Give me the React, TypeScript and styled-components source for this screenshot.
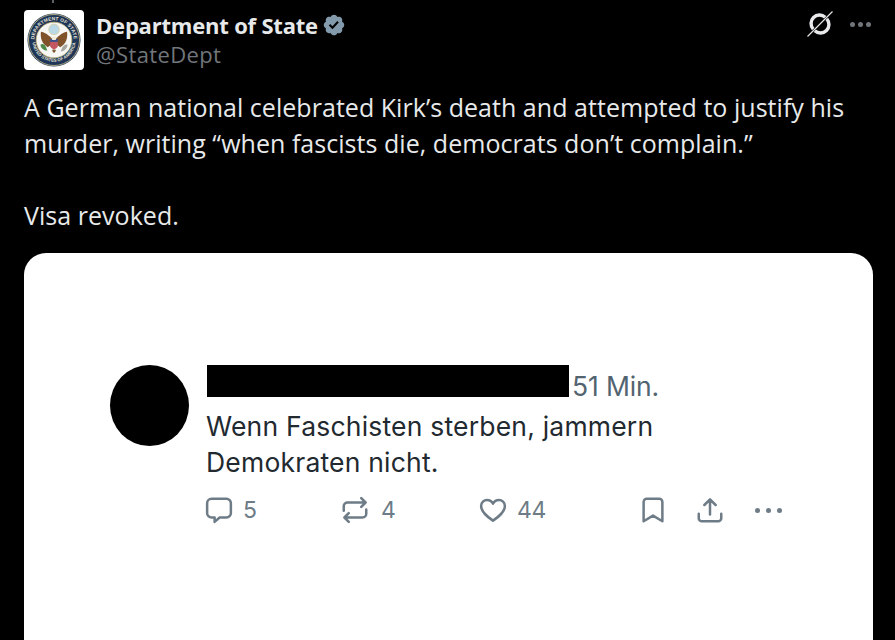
import React from "react";
import styled, { createGlobalStyle } from "styled-components";

const Global = createGlobalStyle`
  html, body { margin: 0; padding: 0; background: #000; }
  body { width: 895px; height: 640px; overflow: hidden; }
`;

const Page = styled.main`
  width: 895px;
  height: 640px;
  overflow: hidden;
  background: #000;
  padding: 10px 22px 0 24px;
  box-sizing: border-box;
  font-family: "Open Sans", "Noto Sans", sans-serif;
`;

const Header = styled.header`
  display: flex;
  align-items: flex-start;
  gap: 12px;
  height: 60px;
`;

const Avatar = styled.div`
  position: relative;
  width: 60px;
  height: 60px;
  flex: none;
  border-radius: 4px;
  background: #fff;
  display: flex;
  align-items: center;
  justify-content: center;
`;

const ThreadTick = styled.span`
  position: absolute;
  top: -10px;
  left: 28px;
  width: 2px;
  height: 3px;
  background: #5c6166;
`;

const Identity = styled.div`
  display: flex;
  flex-direction: column;
  flex: 1;
`;

const NameRow = styled.div`
  display: flex;
  align-items: center;
  gap: 4px;
  height: 30px;
`;

const Name = styled.span`
  color: #e7e9ea;
  font-size: 22px;
  font-weight: 700;
  letter-spacing: -0.2px;
  line-height: 29px;
`;

const Handle = styled.span`
  color: #71767b;
  font-size: 22px;
  line-height: 29px;
  letter-spacing: 0.35px;
`;

const Actions = styled.div`
  display: flex;
  align-items: center;
  gap: 17px;
  padding: 1px 2px 0 0;
`;

const Body = styled.p`
  margin: 19px 0 0;
  color: #e7e9ea;
  font-size: 25px;
  font-weight: 500;
  line-height: 36px;
  letter-spacing: 0.04px;
  white-space: pre-line;
`;

const Card = styled.section`
  margin-top: 20px;
  width: 849px;
  height: 420px;
  background: #fff;
  border-radius: 22px;
  padding: 112px 0 0 86px;
  box-sizing: border-box;
  display: flex;
  align-items: flex-start;
  gap: 18px;
  font-family: Inter, Roboto, sans-serif;
`;

const Blackout = styled.div`
  width: 79px;
  height: 81px;
  flex: none;
  border-radius: 50%;
  background: #000;
`;

const PostColumn = styled.div`
  display: flex;
  flex-direction: column;
  width: 600px;
`;

const MetaRow = styled.div`
  display: flex;
  align-items: flex-end;
  gap: 3px;
  height: 32px;
`;

const Redaction = styled.div`
  width: 362px;
  height: 32px;
  background: #000;
  flex: none;
`;

const Time = styled.span`
  color: #536471;
  font-size: 26.5px;
  line-height: 27px;
  letter-spacing: -0.15px;
  margin-bottom: -3px;
`;

const Quote = styled.p`
  margin: 11px 0 0 -1px;
  color: #22292f;
  font-size: 26.5px;
  line-height: 36px;
  letter-spacing: 0.2px;
  white-space: pre-line;
`;

const Stats = styled.div`
  display: flex;
  align-items: center;
  margin: 12px 0 0 -3px;
  height: 36px;
`;

const Stat = styled.div<{ $width: number; $gap?: number }>`
  display: flex;
  align-items: center;
  gap: ${(p) => p.$gap ?? 11}px;
  width: ${(p) => p.$width}px;
  flex: none;
  color: #6e7c87;
  font-size: 23px;
  letter-spacing: -0.4px;
`;

const Seal = () => (
  <svg width="54" height="54" viewBox="0 0 56 56">
    <defs>
      <path id="sealTop" d="M7.500 28a20.500 20.500 0 0 1 41 0" />
      <path id="sealBottom" d="M5.500 28a22.500 22.500 0 0 0 45 0" />
    </defs>
    <circle cx="28" cy="28" r="27.500" fill="#1f3658" />
    <circle cx="28" cy="28" r="26.500" fill="none" stroke="#d8c98c" strokeWidth="0.8" />
    <circle cx="28" cy="28" r="18.500" fill="#f6f6f4" stroke="#c8b87a" strokeWidth="0.8" />
    <text fontSize="5" fontWeight="700" fill="#e8e5d4" fontFamily="Liberation Sans, sans-serif" letterSpacing="0.15">
      <textPath href="#sealTop" startOffset="50%" textAnchor="middle">DEPARTMENT OF STATE</textPath>
    </text>
    <text fontSize="4.500" fontWeight="700" fill="#e8e5d4" fontFamily="Liberation Sans, sans-serif">
      <textPath href="#sealBottom" startOffset="50%" textAnchor="middle">UNITED STATES OF AMERICA</textPath>
    </text>
    <circle cx="28" cy="17" r="5.500" fill="#bcd9e8" stroke="#d6cf9c" strokeWidth="0.8" />
    <path d="M26 27 C23 23 18 20 14.500 19.500 C13.500 26 15.500 32 21.500 35.500 L25 33Z" fill="#80522a" />
    <path d="M30 27 C33 23 38 20 41.500 19.500 C42.500 26 40.500 32 34.500 35.500 L31 33Z" fill="#80522a" />
    <path d="M24 27h8v7c0 2-2 3-4 4-2-1-4-2-4-4Z" fill="#c45662" />
    <path d="M24 27h8v3h-8Z" fill="#39508a" />
    <path d="M26 24.500h4v3.500h-4Z" fill="#f1ead6" />
    <path d="M14 33c2-2 5 0 6 3l1 3c-3 0-7-2-7-6Z" fill="#4d8a4a" />
    <path d="M42 33c-2-1-5 1-6 4l-1 3c3 0 7-3 7-7Z" fill="#a8a8a0" />
    <path d="M26 38h4l-1 3h-2Z" fill="#7a5a30" />
  </svg>
);

const Verified = () => (
  <svg width="24" height="24" viewBox="0 0 22 22">
    <path
      fill="#829aab"
      d="M20.396 11c-.018-.646-.215-1.275-.57-1.816-.354-.54-.852-.972-1.438-1.246.223-.607.27-1.264.14-1.897-.131-.634-.437-1.218-.882-1.687-.47-.445-1.053-.75-1.687-.882-.633-.13-1.29-.083-1.897.14-.273-.587-.704-1.086-1.245-1.44S11.647 1.62 11 1.604c-.646.017-1.273.213-1.813.568s-.969.854-1.24 1.44c-.608-.223-1.267-.272-1.902-.14-.635.13-1.22.436-1.69.882-.445.47-.749 1.055-.878 1.688-.13.633-.08 1.29.144 1.896-.587.274-1.087.705-1.443 1.245-.356.54-.555 1.17-.574 1.817.02.647.218 1.276.574 1.817.356.54.856.972 1.443 1.245-.224.606-.274 1.263-.144 1.896.13.634.433 1.218.877 1.688.47.443 1.054.747 1.687.878.633.132 1.29.084 1.897-.136.274.586.705 1.084 1.246 1.439.54.354 1.17.551 1.816.569.647-.016 1.276-.213 1.817-.567s.972-.854 1.245-1.44c.604.239 1.266.296 1.903.164.636-.132 1.22-.447 1.68-.907.46-.46.776-1.044.908-1.681s.075-1.299-.165-1.903c.586-.274 1.084-.705 1.439-1.246.354-.54.551-1.17.569-1.816z"
    />
    <path fill="#000" d="M9.662 14.850l-3.429-3.428 1.293-1.302 2.072 2.072 4.400-4.794 1.347 1.246z" />
  </svg>
);

const SlashCircle = () => (
  <svg width="26" height="26" viewBox="0 0 26 26" fill="none">
    <path d="M18.200 6.200A8.500 8.500 0 0 0 6.200 18.200" stroke="#e7e9ea" strokeWidth="3.400" />
    <path d="M7.800 19.800A8.500 8.500 0 0 0 19.800 7.800" stroke="#e7e9ea" strokeWidth="3.400" />
    <path d="M0.500 25.500 L25.500 0.500" stroke="#e7e9ea" strokeWidth="1.100" />
  </svg>
);

const Dots = ({ size, color, gap }: { size: number; color: string; gap: number }) => (
  <svg width={size * 3 + gap * 2} height={size} viewBox={`0 0 ${size * 3 + gap * 2} ${size}`}>
    {[0, 1, 2].map((i) => (
      <circle key={i} cx={size / 2 + i * (size + gap)} cy={size / 2} r={size / 2} fill={color} />
    ))}
  </svg>
);

const Icon = styled.svg.attrs({ viewBox: "0 0 24 24", fill: "none" })`
  width: 30px;
  height: 30px;
  flex: none;
  stroke: #6e7c87;
  stroke-width: 2;
  stroke-linecap: round;
  stroke-linejoin: round;
`;

const Reply = () => (
  <Icon>
    <path d="M6 3h12a3.500 3.500 0 0 1 3.500 3.500v8a3.500 3.500 0 0 1-3.500 3.500h-5.500l-4 3.500V18H6a3.500 3.500 0 0 1-3.500-3.500v-8A3.500 3.500 0 0 1 6 3Z" />
  </Icon>
);

const Retweet = () => (
  <Icon>
    <path d="M3 12.500V9a3 3 0 0 1 3-3h14.500M17 2.500 20.500 6 17 9.500" />
    <path d="M21 11.500V15a3 3 0 0 1-3 3H3.500M7 14.500 3.500 18 7 21.500" />
  </Icon>
);

const Heart = () => (
  <Icon>
    <path d="M12 20.500C7 17 2.500 13.500 2.500 8.800 2.500 5.900 4.800 4 7.200 4c2 0 3.800 1 4.800 3 1-2 2.800-3 4.800-3 2.400 0 4.700 1.900 4.700 4.800 0 4.700-4.500 8.200-9.500 11.700Z" />
  </Icon>
);

const Bookmark = () => (
  <Icon>
    <path d="M4.500 5.500a2.500 2.500 0 0 1 2.500-2.500h10a2.500 2.500 0 0 1 2.500 2.500V21L12 16.500 4.500 21Z" />
  </Icon>
);

const Share = () => (
  <Icon>
    <path d="M12 15.500V3.500M7.500 8 12 3.500 16.500 8M3 15v3.500A2.500 2.500 0 0 0 5.500 21h13a2.500 2.500 0 0 0 2.500-2.500V15" />
  </Icon>
);

export default function App() {
  return (
    <Page>
      <Global />
      <Header>
        <Avatar>
          <ThreadTick />
          <Seal />
        </Avatar>
        <Identity>
          <NameRow>
            <Name>Department of State</Name>
            <Verified />
          </NameRow>
          <Handle>@StateDept</Handle>
        </Identity>
        <Actions>
          <SlashCircle />
          <Dots size={5} color="#71767b" gap={3} />
        </Actions>
      </Header>
      <Body>
        {"A German national celebrated Kirk’s death and attempted to justify his\nmurder, writing “when fascists die, democrats don’t complain.”\n\nVisa revoked."}
      </Body>
      <Card>
        <Blackout />
        <PostColumn>
          <MetaRow>
            <Redaction />
            <Time>51 Min.</Time>
          </MetaRow>
          <Quote>{"Wenn Faschisten sterben, jammern\nDemokraten nicht."}</Quote>
          <Stats>
            <Stat $width={136} $gap={9}><Reply />5</Stat>
            <Stat $width={138}><Retweet />4</Stat>
            <Stat $width={160} $gap={9}><Heart />44</Stat>
            <Stat $width={57}><Bookmark /></Stat>
            <Stat $width={60}><Share /></Stat>
            <Stat $width={30}><Dots size={5} color="#6e7c87" gap={6} /></Stat>
          </Stats>
        </PostColumn>
      </Card>
    </Page>
  );
}
